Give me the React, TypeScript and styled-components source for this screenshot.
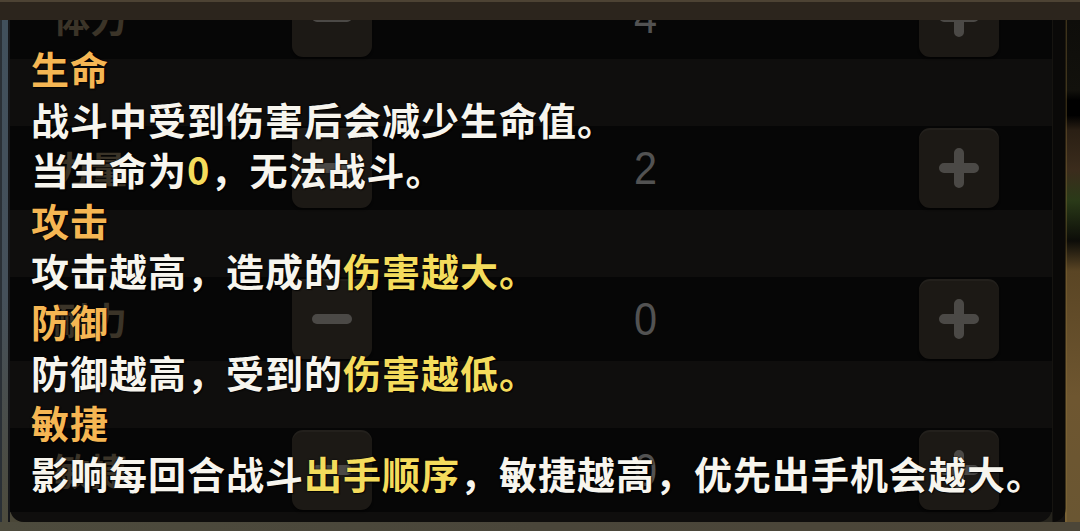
import React from "react";
import styled, { createGlobalStyle } from "styled-components";

const GlobalStyle = createGlobalStyle`
  html, body { margin: 0; padding: 0; background: #000; }
  * { box-sizing: border-box; }
`;

const CJK = `"Noto Sans CJK SC", "Noto Sans", sans-serif`;

const Screen = styled.div`
  position: relative;
  width: 1080px;
  height: 531px;
  overflow: hidden;
  display: flex;
  flex-direction: column;
  background: #4a4738;
  font-family: ${CJK};
`;

const TopBar = styled.div`
  position: relative;
  z-index: 1;
  flex: none;
  height: 20px;
  background: #2c251d;
  border-top: 2px solid #4d4334;
`;

const Middle = styled.div`
  flex: 1;
  min-height: 0;
  display: flex;
`;

const LeftRail = styled.div`
  flex: none;
  width: 10px;
  background: linear-gradient(to bottom, #41505c 0%, #45505a 55%, #4d4b3d 100%);
  box-shadow: inset -2px 0 0 #16171a, inset 2px 0 0 #2a3036;
`;

const StatPanel = styled.div`
  flex: none;
  width: 1042px;
  background: #1e1c1a;
  border-radius: 0 0 14px 14px;
  display: flex;
  flex-direction: column;
  gap: 67px;
`;

const PanelEdge = styled.div`
  flex: none;
  width: 13px;
  background: #141210;
  border-left: 1px solid #2c2821;
`;

const RightRail = styled.div`
  flex: none;
  width: 15px;
  background: linear-gradient(
    to bottom,
    #0e0d0a 0%,
    #12110c 14%,
    #000 16%,
    #000 19%,
    #2a1f14 22%,
    #3b2c1c 30%,
    #2a3a18 36%,
    #0c0c08 44%,
    #5a4524 50%,
    #6e5630 75%,
    #6a5632 100%
  );
  box-shadow: inset 2px 0 0 rgba(150, 120, 60, 0.35);
`;

const BottomBar = styled.div`
  flex: none;
  height: 9px;
  background: linear-gradient(to right, #4d4b3d, #4a463a 50%, #4c4638);
`;

const StatRow = styled.div<{ $first?: boolean }>`
  flex: none;
  height: 84px;
  margin-top: ${(p) => (p.$first ? "-45px" : "0")};
  background: #0c0c0c;
  display: grid;
  grid-template-columns: 282px 80px 1fr 80px 53px;
  align-items: center;
`;

const StatLabel = styled.div`
  padding-left: 43px;
  font-size: 37px;
  font-weight: 700;
  color: #766850;
  white-space: nowrap;
`;

const StatValue = styled.div`
  text-align: center;
  font-family: "Liberation Sans", Arial, sans-serif;
  font-size: 46px;
  color: #a4a4a4;
  transform: scaleX(0.9);
`;

const StepButton = styled.div`
  width: 80px;
  height: 80px;
  border-radius: 11px;
  background: #38322a;
  box-shadow: inset 0 2px 0 rgba(255, 255, 255, 0.07), 0 2px 2px rgba(0, 0, 0, 0.4);
  display: flex;
  align-items: center;
  justify-content: center;
`;

const Glyph = ({ plus }: { plus?: boolean }) => (
  <svg width="44" height="44" viewBox="0 0 44 44">
    <path
      d={plus ? "M22 7 V37 M7 22 H37" : "M7 22 H37"}
      stroke="#96928c"
      strokeWidth="10"
      strokeLinecap="round"
      fill="none"
    />
  </svg>
);

const Tooltip = styled.div`
  position: absolute;
  left: 10px;
  top: 20px;
  width: 1056px;
  height: 502px;
  border-radius: 0 0 14px 14px;
  background: rgba(0, 0, 0, 0.5);
  padding: 23px 0 0 21px;
  z-index: 2;
`;

const TipLine = styled.div<{ $title?: boolean }>`
  height: 50.6px;
  line-height: 50.6px;
  font-size: 38px;
  font-weight: 700;
  letter-spacing: 1px;
  white-space: nowrap;
  color: ${(p) => (p.$title ? "#f5b653" : "#f7f5ee")};
  text-shadow: 0 0 2px rgba(0, 0, 0, 0.9), 1px 1px 1px rgba(0, 0, 0, 0.7);
`;

const Hi = styled.span`
  color: #f4dc5c;
`;

type Stat = { label: string; value: number };

const stats: Stat[] = [
  { label: "体力", value: 4 },
  { label: "力量", value: 2 },
  { label: "耐力", value: 0 },
  { label: "敏捷", value: 0 },
];

export default function App() {
  return (
    <>
      <GlobalStyle />
      <Screen>
        <TopBar />
        <Middle>
          <LeftRail />
          <StatPanel>
            {stats.map((s, i) => (
              <StatRow key={s.label} $first={i === 0}>
                <StatLabel>{s.label}</StatLabel>
                <StepButton>
                  <Glyph />
                </StepButton>
                <StatValue>{s.value}</StatValue>
                <StepButton>
                  <Glyph plus />
                </StepButton>
                <span />
              </StatRow>
            ))}
          </StatPanel>
          <PanelEdge />
          <RightRail />
        </Middle>
        <BottomBar />
        <Tooltip>
          <TipLine $title>生命</TipLine>
          <TipLine>战斗中受到伤害后会减少生命值。</TipLine>
          <TipLine>
            当生命为<Hi>0</Hi>，无法战斗。
          </TipLine>
          <TipLine $title>攻击</TipLine>
          <TipLine>
            攻击越高，造成的<Hi>伤害越大。</Hi>
          </TipLine>
          <TipLine $title>防御</TipLine>
          <TipLine>
            防御越高，受到的<Hi>伤害越低。</Hi>
          </TipLine>
          <TipLine $title>敏捷</TipLine>
          <TipLine>
            影响每回合战斗<Hi>出手顺序</Hi>，敏捷越高，优先出手机会越大。
          </TipLine>
        </Tooltip>
      </Screen>
    </>
  );
}
